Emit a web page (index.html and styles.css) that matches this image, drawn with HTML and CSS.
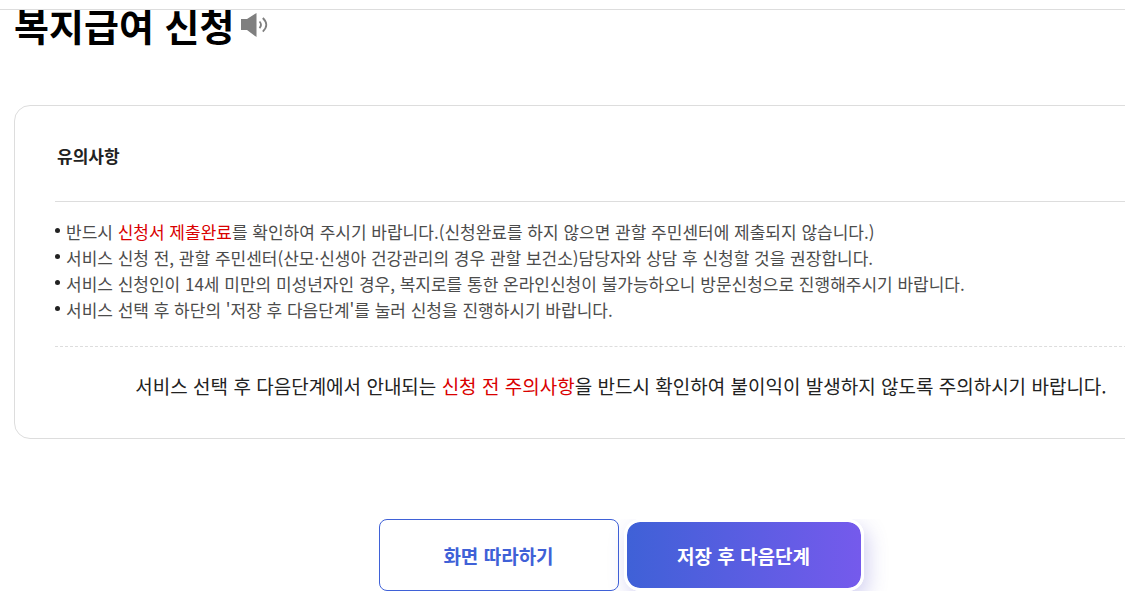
FILE: index.html
```html
<!DOCTYPE html>
<html lang="ko">
<head>
  <meta charset="UTF-8">
  <meta name="viewport" content="width=device-width, initial-scale=1">
  <title>복지급여 신청</title>
  <link rel="stylesheet" href="styles.css">
</head>
<body>

  <header class="top-bar"></header>

  <main class="content">
    <div class="page-title">
      <h1>복지급여 신청</h1>
      <button type="button" class="sound-btn" aria-label="음성 듣기">
        <svg width="28" height="26" viewBox="0 0 28 26" aria-hidden="true">
          <path d="M1 7h6L16.500 1v24L7 18H1z" fill="#7f7f7f"/>
          <path d="M19.500 9.500q3 3.300 0 6.600M22.800 6q7 6.800 0 13.600" fill="none" stroke="#7f7f7f" stroke-width="1.800"/>
        </svg>
      </button>
    </div>

    <!-- Notice box -->
    <section class="notice">
      <h2>유의사항</h2>
      <ul>
        <li>반드시 <em>신청서 제출완료</em>를 확인하여 주시기 바랍니다.(신청완료를 하지 않으면 관할 주민센터에 제출되지 않습니다.)</li>
        <li>서비스 신청 전, 관할 주민센터(산모·신생아 건강관리의 경우 관할 보건소)담당자와 상담 후 신청할 것을 권장합니다.</li>
        <li>서비스 신청인이 14세 미만의 미성년자인 경우, 복지로를 통한 온라인신청이 불가능하오니 방문신청으로 진행해주시기 바랍니다.</li>
        <li>서비스 선택 후 하단의 '저장 후 다음단계'를 눌러 신청을 진행하시기 바랍니다.</li>
      </ul>
      <p>서비스 선택 후 다음단계에서 안내되는 <em>신청 전 주의사항</em>을 반드시 확인하여 불이익이 발생하지 않도록 주의하시기 바랍니다.</p>
    </section>

    <!-- Buttons -->
    <div class="buttons">
      <button type="button" class="btn btn-line">화면 따라하기</button>
      <button type="button" class="btn btn-fill">저장 후 다음단계</button>
    </div>
  </main>

</body>
</html>
```
FILE: styles.css
```css
* {
  box-sizing: border-box;
}

body {
  margin: 0;
  font-family: "Noto Sans CJK KR", sans-serif;
  color: #222;
  background: #fff;
  overflow-x: hidden;
}

h1, h2, p, ul {
  margin: 0;
  padding: 0;
}

em {
  font-style: normal;
  color: #d90000;
}

.top-bar {
  height: 10px;
  border-bottom: 1px solid #ddd;
}

/* runs past the right edge of narrow windows */
.content {
  margin-left: 14px;
  margin-right: -103px;
  overflow: hidden;
}

.page-title {
  display: flex;
  align-items: center;
  gap: 6px;
  height: 30px;
}

h1 {
  font-size: 38px;
  line-height: 56px;
  font-weight: 700;
  color: #000;
}

.sound-btn {
  display: flex;
  padding: 0;
  border: none;
  background: none;
  cursor: pointer;
}

.notice {
  margin-top: 65px;
  padding: 32px 40px 37px;
  border: 1px solid #ddd;
  border-radius: 16px;
}

.notice h2 {
  padding: 0 2px 27px;
  font-size: 17px;
  line-height: 36px;
  font-weight: 700;
  border-bottom: 1px solid #ddd;
}

.notice ul {
  padding: 17px 0 23px;
  list-style: none;
  border-bottom: 1px dashed #ddd;
}

.notice li {
  position: relative;
  padding-left: 11px;
  font-size: 17px;
  line-height: 26px;
  color: #4c4c4c;
}

.notice li::before {
  content: "";
  position: absolute;
  left: 0;
  top: 9px;
  width: 5px;
  height: 5px;
  border-radius: 50%;
  background: #222;
}

.notice p {
  padding-top: 24px;
  font-size: 19px;
  line-height: 30px;
  text-align: center;
}

.buttons {
  display: flex;
  justify-content: center;
  gap: 5px;
  margin-top: 80px;
  overflow: hidden;
}

.btn {
  width: 240px;
  height: 72px;
  font-family: inherit;
  font-size: 19px;
  font-weight: 700;
  cursor: pointer;
}

.btn-line {
  border: 1px solid #3f61d7;
  border-radius: 8px;
  background: none;
  color: #3f61d7;
}

.btn-fill {
  border: 3px solid #fff;
  border-radius: 16px;
  background: linear-gradient(90deg, #3f61d7, #755aec) padding-box;
  box-shadow: 4px 8px 20px rgba(80, 70, 200, 0.25);
  color: #fff;
}
```
